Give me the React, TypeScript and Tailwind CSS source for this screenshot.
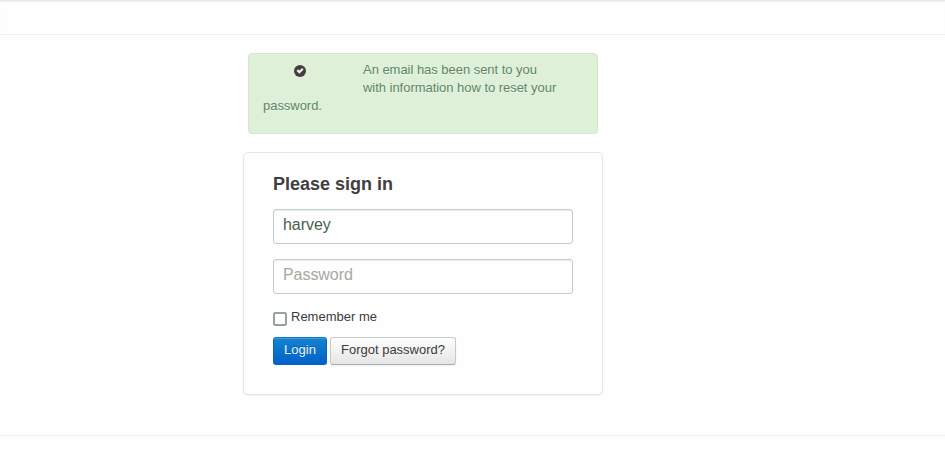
export default function App() {
  const field =
    "block h-[35px] w-[300px] rounded-[3px] border border-[#c3cccf] bg-[#fefefe] px-[9px] pt-[5px] pb-[8px] text-[16px] leading-[20px] tracking-[-0.06px] text-[#4a5f50] shadow-[inset_0_1px_1px_rgba(0,0,0,0.075)] outline-none placeholder:text-[#a8a8a0] placeholder:opacity-100";
  return (
    <div className="flex h-[458px] flex-col bg-[#fefefe] font-['Liberation_Sans',Arial,sans-serif] text-[13px] leading-[18px] text-[#3b3b3b]">
      <header className="h-[34px] shrink-0 border-t border-[#e9e9e9] shadow-[inset_0_1px_1px_rgba(0,0,0,0.06)]" />
      <hr className="m-0 h-px shrink-0 border-0 bg-[#f0f0f0]" />
      <main className="ml-[243px] mt-[18px] w-[360px]">
        <div className="mx-[5px] flex h-[81px] flex-col rounded-[4px] border border-[#d6e9c6] bg-[#dff0d8] px-[14px] pt-[7px] tracking-[-0.035px] text-[#5b8667] [text-shadow:0_1px_0_rgba(255,255,255,0.5)]">
          <div className="flex">
            <div className="w-[100px] pl-[31px] pt-[4px]">
              <svg width="12" height="12" viewBox="0 0 12 12" aria-hidden="true">
                <circle cx="6" cy="6" r="6" fill="#443d43" />
                <path d="M2.5 6 4.2 4.3 5.5 5.5 8 3 9.6 4.6 5.5 8.8Z" fill="#e5f3df" />
              </svg>
            </div>
            <p className="whitespace-nowrap">
              An email has been sent to you
              <br />
              with information how to reset your
            </p>
          </div>
          <p>password.</p>
        </div>
        <form
          className="mt-[18px] h-[243px] rounded-[5px] border border-[#e5e5e5] bg-[#fefefe] px-[29px] pt-[19px] shadow-[0_1px_2px_rgba(0,0,0,0.05)]"
          onSubmit={(e) => e.preventDefault()}
        >
          <h2 className="mb-[13px] text-[18px] font-bold leading-[24px] text-[#403e40]">Please sign in</h2>
          <input className={field} type="text" defaultValue="harvey" />
          <input className={`${field} mt-[15px]`} type="password" placeholder="Password" />
          <label className="mt-[14px] flex h-[18px] items-start">
            <input
              type="checkbox"
              className="mr-[4px] mt-[4px] h-[14px] w-[14px] shrink-0 appearance-none rounded-[2px] border-2 border-[#98a29f] bg-[#fefefe]"
            />
            Remember me
          </label>
          <div className="mt-[11px] flex gap-[3px]">
            <button className="h-[28px] w-[54px] rounded-[3px] border border-[#0862b8] border-t-[#1078c4] bg-linear-to-b from-[#1484d0] to-[#0560c8] pb-[3px] text-[#eef5fb] shadow-[inset_0_1px_0_rgba(255,255,255,0.2)] [text-shadow:0_-1px_0_rgba(0,0,0,0.25)]">
              Login
            </button>
            <button className="h-[28px] w-[126px] rounded-[3px] border border-[#c4caca] border-b-[#a8acb2] bg-linear-to-b from-[#fefefe] to-[#e5e5e5] pb-[3px] shadow-[0_1px_2px_rgba(0,0,0,0.05)]">
              Forgot password?
            </button>
          </div>
        </form>
      </main>
      <hr className="m-0 mt-[40px] h-px shrink-0 border-0 bg-[#f0f0f0]" />
    </div>
  );
}
